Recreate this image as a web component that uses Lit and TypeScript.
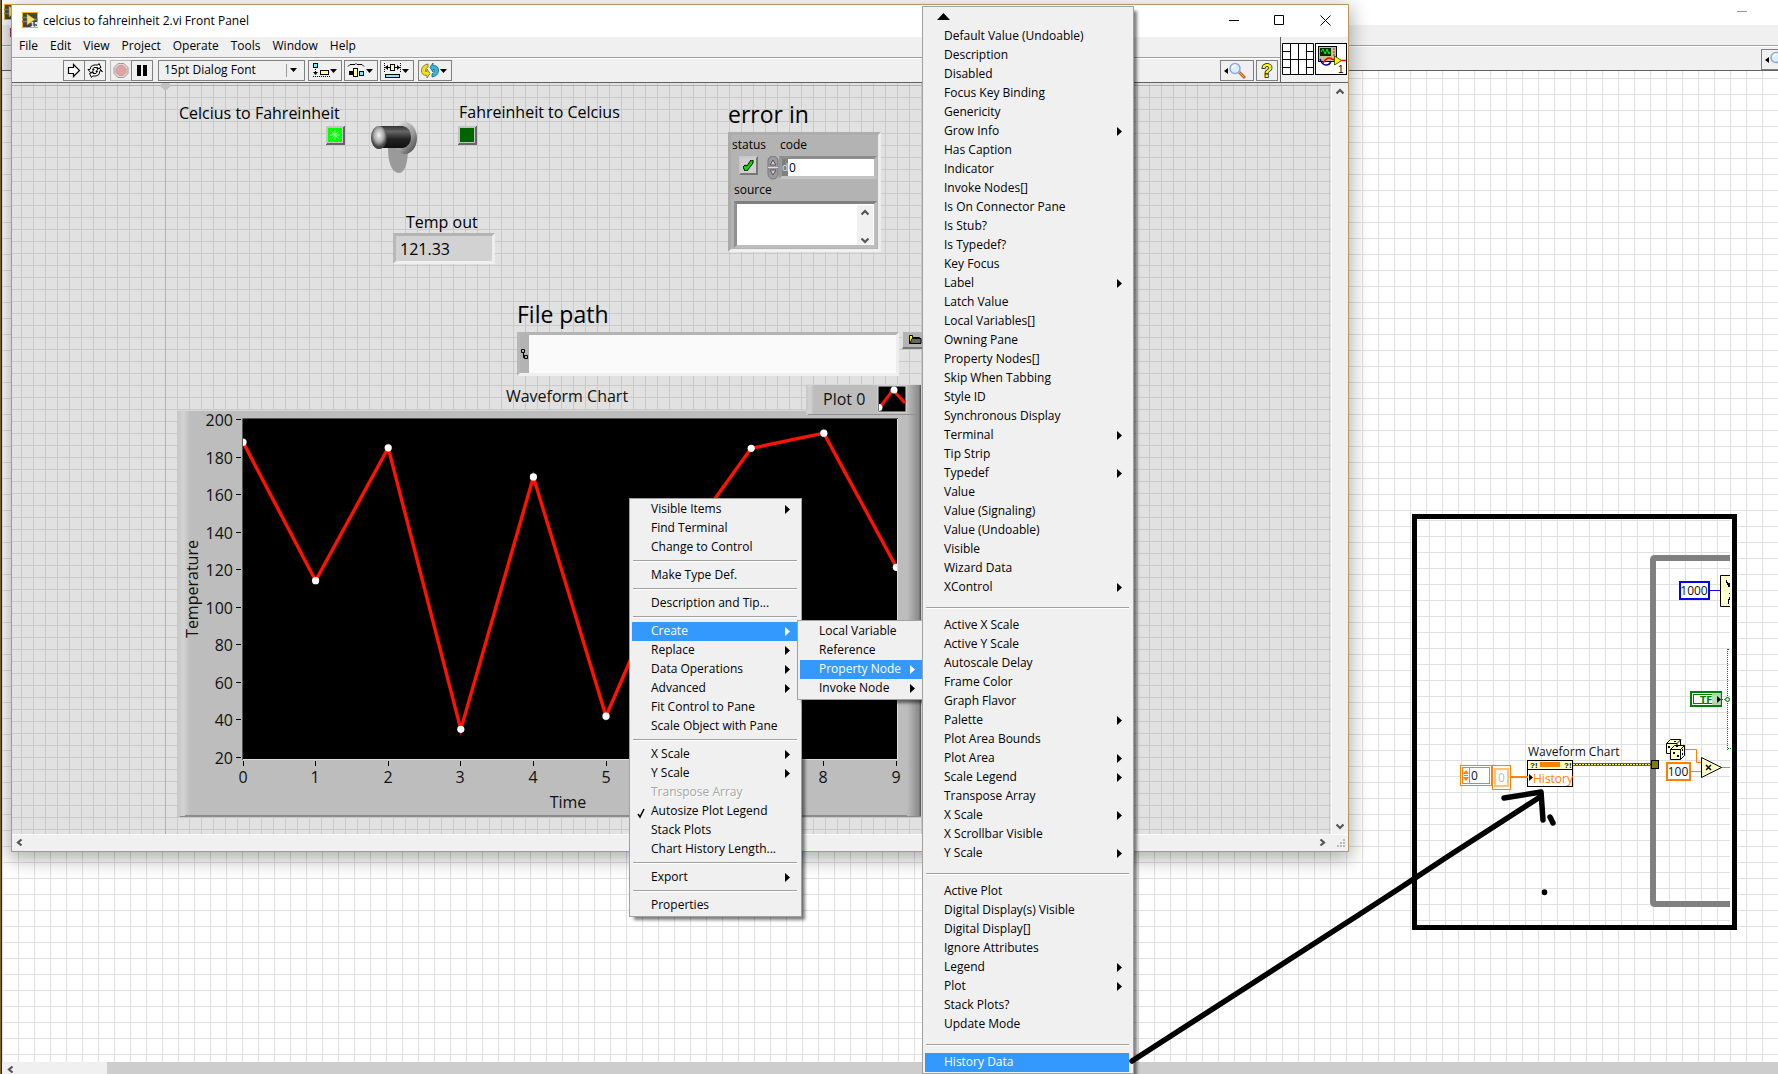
import { LitElement, html, svg, css, nothing } from "lit";
import { customElement, property } from "lit/decorators.js";
import { classMap } from "lit/directives/class-map.js";

type Item = {
  text?: string;
  sub?: boolean;
  active?: boolean;
  disabled?: boolean;
  checked?: boolean;
};

const SEP: Item = {};
const t = (text: string, extra: Partial<Item> = {}): Item => ({ text, ...extra });
const s = (text: string, extra: Partial<Item> = {}): Item => ({ text, sub: true, ...extra });

const CHART_MENU: Item[] = [
  s("Visible Items"), t("Find Terminal"), t("Change to Control"), SEP,
  t("Make Type Def."), SEP,
  t("Description and Tip..."), SEP,
  s("Create", { active: true }), s("Replace"), s("Data Operations"), s("Advanced"),
  t("Fit Control to Pane"), t("Scale Object with Pane"), SEP,
  s("X Scale"), s("Y Scale"), t("Transpose Array", { disabled: true }),
  t("Autosize Plot Legend", { checked: true }), t("Stack Plots"), t("Chart History Length..."), SEP,
  s("Export"), SEP,
  t("Properties"),
];

const CREATE_MENU: Item[] = [
  t("Local Variable"), t("Reference"), s("Property Node", { active: true }), s("Invoke Node"),
];

const PROPERTY_MENU: Item[] = [
  t("Default Value (Undoable)"), t("Description"), t("Disabled"), t("Focus Key Binding"),
  t("Genericity"), s("Grow Info"), t("Has Caption"), t("Indicator"), t("Invoke Nodes[]"),
  t("Is On Connector Pane"), t("Is Stub?"), t("Is Typedef?"), t("Key Focus"), s("Label"),
  t("Latch Value"), t("Local Variables[]"), t("Owning Pane"), t("Property Nodes[]"),
  t("Skip When Tabbing"), t("Style ID"), t("Synchronous Display"), s("Terminal"),
  t("Tip Strip"), s("Typedef"), t("Value"), t("Value (Signaling)"), t("Value (Undoable)"),
  t("Visible"), t("Wizard Data"), s("XControl"), SEP,
  t("Active X Scale"), t("Active Y Scale"), t("Autoscale Delay"), t("Frame Color"),
  t("Graph Flavor"), s("Palette"), t("Plot Area Bounds"), s("Plot Area"), s("Scale Legend"),
  t("Transpose Array"), s("X Scale"), t("X Scrollbar Visible"), s("Y Scale"), SEP,
  t("Active Plot"), t("Digital Display(s) Visible"), t("Digital Display[]"),
  t("Ignore Attributes"), s("Legend"), s("Plot"), t("Stack Plots?"), t("Update Mode"), SEP,
  t("History Data", { active: true }),
];

const FONT = css`"Open Sans", "Noto Sans", sans-serif`;

@customElement("popup-menu")
export class PopupMenu extends LitElement {
  @property({ attribute: false }) items: Item[] = [];
  @property({ type: Boolean }) tall = false;

  static styles = css`
    :host {
      display: block;
      box-sizing: border-box;
      background: #f0f0f0;
      border: 1px solid #a0a0a0;
      padding: 1px 4px 1px 2px;
      box-shadow: 4px 4px 3px -1px rgba(0, 0, 0, 0.5);
      font: 12px/16px ${FONT};
      color: #000;
    }
    .item {
      display: grid;
      grid-template-columns: 19px 1fr 5px;
      align-items: center;
      width: 100%;
      height: 19px;
      margin: 0;
      border: 0;
      padding: 0 7px 0 0;
      background: none;
      font: inherit;
      color: inherit;
      text-align: left;
      white-space: nowrap;
    }
    .label { grid-column: 2; padding-bottom: 2px; }
    .tick { grid-column: 1; grid-row: 1; }
    .active { background: #3399ff; color: #fff; }
    .disabled { color: #a6a6a6; text-shadow: 1px 1px #fff; }
    .arrow { display: block; fill: currentColor; grid-column: 3; }
    .sep {
      height: 1px;
      margin: 3px 0 4px 1px;
      border: 0;
      background: #a0a0a0;
      border-bottom: 1px solid #fff;
    }
    .tall { margin: 10px 0 7px 1px; }
    .up { display: flex; height: 19px; padding: 0 12px 2px; align-items: center; border: 0; background: none; }
  `;

  render() {
    return html`
      ${this.tall
        ? html`<button class="up" aria-label="Scroll up">
            <svg width="13" height="7"><path d="M6.500 0L13 7H0z" /></svg>
          </button>`
        : nothing}
      ${this.items.map((i) =>
        i.text
          ? html`<button
              role="menuitem"
              class=${classMap({ item: true, active: !!i.active, disabled: !!i.disabled })}
            >
              ${i.checked
                ? html`<svg class="tick" width="14" height="14">
                    <path d="M6 9l2 3 4-8" fill="none" stroke="#000" stroke-width="1.500" />
                  </svg>`
                : nothing}
              <span class="label">${i.text}</span>
              ${i.sub
                ? html`<svg class="arrow" width="5" height="9"><path d="M0 0l5 4.500-5 4.500z" /></svg>`
                : nothing}
            </button>`
          : html`<hr class=${classMap({ sep: true, tall: this.tall })} />`
      )}
    `;
  }
}

const X0 = 66;
const STEP = 72.6;
const READINGS: Array<[number, number]> = [
  [0, 188], [1, 114.200], [2, 185], [3, 35], [4, 169.500], [5, 42], [6, 131], [7, 184.700], [8, 192.800], [9, 121.330],
];
const yPos = (v: number) => 347.5 - (v - 20) * 1.877;
const xPos = (v: number) => X0 + v * STEP;

@customElement("waveform-chart")
export class WaveformChart extends LitElement {
  static styles = css`
    :host { display: block; }
    svg { display: block; overflow: visible; }
    text { font: 16px ${FONT}; fill: #111; }
  `;

  render() {
    const line = READINGS.map(([x, v]) => `${xPos(x)},${yPos(v)}`).join(" ");
    return html`<svg width="744" height="433" role="img" aria-label="Waveform Chart">
      <defs>
        <linearGradient id="left"><stop offset="0" stop-color="#c6c6c6" /><stop offset=".5" stop-color="#d3d3d3" /><stop offset="1" stop-color="#bdbdbd" /></linearGradient>
        <linearGradient id="right"><stop offset="0" stop-color="#bdbdbd" /><stop offset=".85" stop-color="#8a8a8a" /><stop offset="1" stop-color="#505050" /></linearGradient>
        <clipPath id="plot"><rect x="66" y="10" width="654" height="339" /></clipPath>
      </defs>
      <rect x="0" y="0" width="744" height="407" fill="#bdbdbd" />
      <rect x="0" y="0" width="13" height="406" fill="url(#left)" />
      <path d="M0 .5H744" stroke="#d8d8d8" />
      <path d="M3 406.500H744M8 405.500H744" stroke="#8c8c8c" />
      <rect x="629" y="-26" width="115" height="31" fill="#bdbdbd" />
      <rect x="629" y="-26" width="8" height="31" fill="url(#left)" />
      <path d="M629 -25.500H744" stroke="#d8d8d8" />
      <rect x="730" y="-25" width="14" height="431" fill="url(#right)" />
      <path d="M631 4.500H742" stroke="#929292" />
      <rect x="65" y="8" width="656" height="342" fill="#ddd" />
      <path d="M65.500 350V8.500H721" stroke="#555" fill="none" />
      <rect x="66" y="9" width="654" height="340" fill="#000" />
      <g clip-path="url(#plot)">
        <polyline points=${line} fill="none" stroke="#ff1200" stroke-width="3.400" />
        ${READINGS.map(([x, v]) => svg`<circle cx=${xPos(x)} cy=${yPos(v)} r="3.600" fill="#fff" />`)}
      </g>
      ${[20, 40, 60, 80, 100, 120, 140, 160, 180, 200].map(
        (v) => svg`
          <path d="M59 ${Math.floor(yPos(v))}.5h5" stroke="#000" />
          <text x="56" y=${Math.floor(yPos(v)) + 7} text-anchor="end">${v}</text>`
      )}
      ${[0, 1, 2, 3, 4, 5, 8, 9].map(
        (v) => svg`
          <path d="M${Math.floor(xPos(v))}.5 351v5" stroke="#000" />
          <text x=${Math.floor(xPos(v))} y="373" text-anchor="middle">${v}</text>`
      )}
      <text x="391" y="398" text-anchor="middle">Time</text>
      <text x="390" y="-8" text-anchor="middle">Waveform Chart</text>
      <text transform="translate(21 179) rotate(-90)" text-anchor="middle">Temperature</text>
      <text x="646" y="-5">Plot 0</text>
      <rect x="701" y="-24" width="28" height="26" fill="#000" stroke="#ddd" />
      <path d="M703 -3L716 -20L728 -7" fill="none" stroke="#ff1200" stroke-width="3" />
      <circle cx="717" cy="-20" r="3.500" fill="#fff" />
      <path d="M702 -6a3.500 3.500 0 0 1 0 7z" fill="#fff" />
    </svg>`;
  }
}

@customElement("diagram-view")
export class DiagramView extends LitElement {
  static styles = css`
    :host { display: block; }
    svg { display: block; }
    text { font: 12px ${FONT}; fill: #111; }
    .orange { fill: #ff8000; }
    .pale { fill: #bbb; }
    .tf { font: bold 9px "DejaVu Sans", sans-serif; fill: #008000; }
    .mark { font: bold 8px "Liberation Sans", sans-serif; }
  `;

  render() {
    return html`<svg width="325" height="416" role="img" aria-label="Block diagram">
      <defs>
        <pattern id="grid" x="17" y="6" width="16" height="16" patternUnits="userSpaceOnUse">
          <path d="M.5 0V16M0 .5H16" stroke="#e0e0e0" />
        </pattern>
      </defs>
      <rect x="2.500" y="2.500" width="320" height="411" fill="#fff" stroke="#000" stroke-width="5" />
      <rect x="5" y="5" width="313" height="406" fill="url(#grid)" />
      <path d="M318 44H243q-2 0-2 2V388q0 2 2 2H318" fill="none" stroke="#808080" stroke-width="6" />

      <rect x="268" y="68" width="29" height="17" fill="#fff" stroke="#00f" stroke-width="2" />
      <text x="282" y="81" text-anchor="middle">1000</text>
      <path d="M298 76.500h11" stroke="#00f" />
      <path d="M318 61.500H308.500v31H318z" fill="#ffffcc" />
      <path d="M318 61.500H308.500v31H318" fill="none" stroke="#000" />
      <path d="M314 66h1v2h1v1h2v4h-2v-2h-1v-2h-1zM317 80h1v3h-1v2h-1v5h1v-4h1v-7h-1z" />

      <rect x="279" y="178" width="30" height="14" fill="#fff" stroke="#008000" stroke-width="2" />
      <rect x="281.500" y="180.500" width="25" height="9" fill="none" stroke="#008000" />
      <rect x="300" y="179" width="9" height="12" fill="#b0d8b0" opacity=".9" />
      <text x="288" y="189" class="tf">TF</text>
      <path d="M305 182l4 3.500-4 3.500z" />
      <path d="M310 185.500h5M315.500 135V236M316 234.500h3M316 135.500h2" stroke="#008000" stroke-dasharray="1 1" />
      <circle cx="315.500" cy="185.500" r="2" fill="#cfe8cf" stroke="#008000" />

      <path d="M273 235.500h11.500v13H290M279 257.500h12M309 253.500h9" fill="none" stroke="#ff8000" />
      <g fill="#ffffcc" stroke="#000">
        <path d="M254.500 229.500l4-4h10v11l-3 3h-11z" />
        <path d="M254.500 229.500h10.500l4-4M265 229.500v8" fill="none" />
        <path d="M258.500 235.500l4-4h10v10l-4 4h-10z" />
        <path d="M258.500 235.500h10l4-4M268.500 235.500v10" fill="none" />
      </g>
      <path d="M256 232h2v2h-2zM261 238h2v2h-2zM265 241h2v2h-2zM270 235h1v2h-1zM270 239h1v2h-1zM264 232h2v1h-2zM262 227h2v1h-2z" />
      <rect x="255" y="249" width="23" height="17" fill="#fff" stroke="#ff8000" stroke-width="2" />
      <text x="266" y="262" text-anchor="middle">100</text>
      <path d="M289.500 243.500v20l20-10z" fill="#ffffcc" stroke="#000" />
      <path d="M294 251l5 5M299 251l-5 5" stroke="#000" stroke-width="1.500" />

      <path d="M161 250.500h78" stroke="#111" stroke-width="3" />
      <path d="M161 250.500h78" stroke="#ffff40" stroke-dasharray="2 1" />
      <path d="M161 249.500h78M161 251.500h78" stroke="#a8a800" stroke-width=".6" />
      <rect x="239.500" y="246.500" width="7" height="8" fill="#808000" stroke="#000" />

      <text x="116" y="242">Waveform Chart</text>
      <rect x="115.500" y="246.500" width="45" height="26" fill="#fff" stroke="#000" />
      <rect x="116" y="247" width="44" height="8" fill="#ffffcc" />
      <path d="M116 255.500h44" stroke="#000" />
      <rect x="128" y="248" width="20" height="5" fill="#ff8000" />
      <text class="mark" x="118" y="254">?!</text>
      <text class="mark" x="152" y="254">?!</text>
      <path d="M117 260l4 3.500-4 3.500z" />
      <text class="orange" x="121" y="269">History</text>

      <path d="M99 263h17" stroke="#ff8000" stroke-width="2" />
      <g fill="#fff" stroke="#ff8000">
        <rect x="48.500" y="251.500" width="31" height="20" />
        <rect x="50.500" y="253.500" width="7" height="16" />
        <rect x="57.500" y="253.500" width="20" height="16" />
        <rect x="80.500" y="251.500" width="18" height="24" />
        <rect x="83" y="255" width="13" height="17" stroke="#ffc080" stroke-width="2" />
      </g>
      <path class="orange" d="M51 260l3-4 3 4zM51 263l3 4 3-4zM52 261h4v1h-4z" />
      <text x="59" y="266">0</text>
      <text class="pale" x="86" y="268">0</text>
    </svg>`;
  }
}

const magnifier = html`<svg width="32" height="19">
  <path d="M3 10l4-3v6z" />
  <path d="M18 11l6 6" stroke="#c66a1c" stroke-width="3" />
  <path d="M18 11l5 5" stroke="#f4a850" stroke-width="1" />
  <circle cx="14" cy="7.500" r="5" fill="#d8f0ff" stroke="#8fa8d8" stroke-width="1.500" />
  <path d="M11 7q1-3 4-3" stroke="#fff" fill="none" stroke-width="1.500" />
</svg>`;

const viIcon = html`<svg width="16" height="16">
  <rect x=".5" y=".5" width="15" height="15" fill="#444" stroke="#f0b000" />
  <path d="M0 5.500h6M0 9.500h6M11 7.500h5" stroke="#2f8fd0" stroke-width="1.500" />
  <path d="M5 2v11l8-5.500z" fill="#ffe060" stroke="#b88a00" stroke-width=".5" />
  <text x="8.500" y="14.500" font-family="Liberation Sans, sans-serif" font-size="7" font-weight="bold" fill="#fff">15</text>
</svg>`;

const drop = svg`<path d="M21 8h7l-3.500 4z" />`;

@customElement("app-root")
export class AppRoot extends LitElement {
  static styles = css`
    :host {
      display: block;
      position: relative;
      height: 100vh;
      overflow: hidden;
      background: linear-gradient(90deg, #7d6434 0 1px, #26282c 1px 2px, #f0f0f0 2px);
      font: 12px/16px ${FONT};
      color: #000;
    }
    * { box-sizing: border-box; }
    svg { display: block; flex: none; }
    button, input, select, textarea { font: inherit; color: inherit; margin: 0; }

    /* block diagram window behind */
    .back {
      display: flex;
      flex-direction: column;
      height: 100%;
      margin-left: 2px;
    }
    .back-title {
      display: flex;
      justify-content: space-between;
      height: 25px;
      padding: 4px 31px 0 2px;
      background: #fff;
    }
    .back-title .min { width: 10px; height: 1px; margin-top: 7px; background: #999; }
    .back-menu { height: 21px; border-bottom: 1px solid #a0a0a0; background: #f0f0f0; padding-left: 7px; color: #602; }
    .back-tools {
      display: flex;
      justify-content: flex-end;
      height: 25px;
      padding-top: 2px;
      border-top: 1px solid #fff;
      border-bottom: 1px solid #606060;
    }
    .back-tools .tool { margin-right: -17px; }
    .back-canvas {
      flex: 1;
      background:
        linear-gradient(#e0e0e0 0 1px, transparent 1px) 0 7px / 16px 16px,
        linear-gradient(90deg, #e0e0e0 0 1px, transparent 1px) 0 0 / 16px 16px,
        #fff;
    }
    .back-scroll { display: flex; height: 12px; background: #f0f0f0; overflow: hidden; }
    .back-scroll .arrow { width: 105px; height: 12px; padding: 4px 0 0 5px; }
    .back-scroll .thumb { flex: 1; background: #cdcdcd; }

    /* front panel window */
    .front {
      position: absolute;
      left: 11px;
      top: 4px;
      width: 1338px;
      height: 848px;
      display: flex;
      flex-direction: column;
      border: 1px solid #b5995a;
      background: #f0f0f0;
      box-shadow: 0 5px 18px 2px rgba(0, 0, 0, 0.32);
    }
    .title { display: flex; align-items: center; height: 32px; padding: 0 17px 2px 10px; background: #fff; }
    .title h1 { flex: 1; margin: 0 0 0 5px; padding-top: 2px; font: inherit; }
    .title .controls { display: flex; gap: 35px; }
    .icon-btn { border: 0; padding: 0; background: none; display: block; }
    .bars { display: flex; height: 46px; border-bottom: 1px solid #606060; }
    .stack { flex: 1; display: flex; flex-direction: column; }
    .menubar { display: flex; gap: 12px; height: 21px; padding-left: 7px; border-bottom: 1px solid #a0a0a0; }
    .menubar button { border: 0; padding: 0 0 2px; background: none; }
    .toolbar { display: flex; height: 24px; padding: 1px 2px 0 51px; border-top: 1px solid #fff; }
    .tool {
      display: block;
      height: 21px;
      border: 1px solid #808080;
      padding: 0;
      background: #f0f0f0;
      flex: none;
    }
    .run { width: 22px; }
    .joined { margin-left: -1px; }
    .dim { border-color: #b8b8b8; margin-left: 4px; }
    .drop { width: 34px; margin-left: 2px; }
    .first { margin-left: 3px; }
    .last { margin-left: 4px; }
    .font { position: relative; width: 147px; height: 21px; margin-left: 5px; }
    .font select {
      width: 100%;
      height: 21px;
      appearance: none;
      border: 1px solid #808080;
      border-radius: 0;
      background: #f0f0f0;
      padding: 0 5px 2px;
    }
    .font svg { position: absolute; right: 0; top: 0; pointer-events: none; }
    .find { width: 34px; margin-left: auto; }
    .help { width: 22px; margin-left: 2px; }
    .panes { display: flex; gap: 1px; width: 68px; padding: 6px 0 0 1px; border-left: 1px solid #606060; }
    .body { flex: 1; display: flex; min-height: 0; }
    .canvas {
      position: relative;
      flex: 1;
      overflow: hidden;
      background:
        linear-gradient(#b0b0b0, #b0b0b0) 0 2px / 100% 1px no-repeat,
        linear-gradient(#b0b0b0, #b0b0b0) 153px 0 / 1px 100% no-repeat,
        linear-gradient(#c9c9c9 0 1px, transparent 1px) 0 2px / 12px 12px,
        linear-gradient(90deg, #c9c9c9 0 1px, transparent 1px) 9px 0 / 12px 12px,
        #e1e1e1;
    }
    .vscroll {
      display: flex;
      flex-direction: column;
      justify-content: space-between;
      width: 17px;
      padding: 5px 0 4px 4px;
      border-left: 1px solid #fff;
    }
    .hscroll {
      display: flex;
      justify-content: space-between;
      height: 17px;
      padding: 4px 2px 0 4px;
      border-top: 1px solid #fff;
    }
    .hscroll .end { display: flex; gap: 10px; }

    /* objects placed freely on the panel */
    .obj { position: absolute; }
    .cap { font-size: 16px; line-height: 22px; white-space: nowrap; }
    .big { font-size: 23px; line-height: 30px; white-space: nowrap; }
    .origin { left: 148px; top: 0; }
    .c2f { left: 167px; top: 19px; }
    .f2c { left: 447px; top: 18px; }
    .led-on { left: 314px; top: 43px; }
    .led-off { left: 446px; top: 43px; }
    .switch { left: 358px; top: 38px; }
    .temp-label { left: 394px; top: 128px; }
    .temp {
      left: 381px;
      top: 150px;
      width: 102px;
      height: 31px;
      border: 3px solid;
      border-color: #b4b4b4 #eee #f0f0f0 #b8b8b8;
      background: #d2d2d2;
      padding: 0 4px;
      font-size: 16px;
      border-radius: 0;
    }
    .err-label { left: 716px; top: 16px; }
    .cluster {
      left: 716px;
      top: 49px;
      width: 153px;
      height: 120px;
      display: grid;
      grid-template-columns: 36px 12px minmax(0, 1fr);
      grid-template-rows: 21px 24px 21px minmax(0, 1fr);
      border: 3px solid;
      border-color: #adadad #ededed #f0f0f0 #aaa;
      background: #b3b3b3;
    }
    .cluster label { line-height: 20px; padding-left: 1px; }
    .cluster .code-label { grid-column: 2 / 4; padding-left: 13px; }
    .check { display: grid; justify-content: start; align-content: start; padding-left: 8px; }
    .check input, .check svg { grid-area: 1 / 1; }
    .check svg { margin: 4px; pointer-events: none; z-index: 1; }
    .check input {
      appearance: none;
      width: 19px;
      height: 19px;
      border: 2px solid;
      border-color: #c8c8c8 #777 #777 #c8c8c8;
      background: #cfcfcf;
    }
    .code { display: flex; height: 23px; margin-right: 1px; border: 3px solid; border-color: #8c8c8c #bcbcbc #c4c4c4 #999; }
    .radix { width: 6px; color: #ddd; background: #808080; font-size: 10px; line-height: 17px; }
    .code input { flex: 1; min-width: 0; border: 0; padding: 0 1px; background: #fff; border-radius: 0; }
    .cluster .source-label { grid-column: 1 / 4; padding-left: 3px; }
    .source {
      grid-column: 1 / 4;
      display: flex;
      margin: 0 1px 1px 3px;
      border: 3px solid;
      border-color: #808080 #bdbdbd #bdbdbd #909090;
      background: #fff;
    }
    .source textarea { flex: 1; min-width: 0; border: 0; padding: 0; resize: none; background: #fff; overflow: hidden; }
    .source .side {
      display: flex;
      flex-direction: column;
      justify-content: space-between;
      width: 16px;
      margin: 1px;
      padding: 4px 4px 0;
      background: #f0f0f0;
    }
    .path-label { left: 505px; top: 216px; }
    .path {
      left: 505px;
      top: 249px;
      width: 382px;
      height: 44px;
      display: flex;
      border: 3px solid;
      border-color: #b4b4b4 #eee #f0f0f0 #b8b8b8;
    }
    .path .handle { width: 9px; background: #b3b3b3; padding: 14px 1px; }
    .path input { flex: 1; min-width: 0; border: 0; background: #fafafa; border-radius: 0; }
    .browse {
      left: 890px;
      top: 248px;
      border: 1px solid;
      border-color: #ddd #777 #777 #ddd;
      border-bottom-width: 2px;
      padding: 2px 5px;
      background: #b3b3b3;
    }
    .chart { left: 165px; top: 327px; }

    .diagram { position: absolute; left: 1412px; top: 514px; }
    .chart-menu { position: absolute; left: 629px; top: 498px; width: 173px; }
    .create-menu { position: absolute; left: 797px; top: 620px; width: 130px; }
    .property-menu { position: absolute; left: 922px; top: 6px; width: 212px; }
    .pen { position: absolute; left: 1120px; top: 780px; pointer-events: none; }
  `;

  private led(cls: string, on: boolean) {
    return html`<svg class="obj ${cls}" width="19" height="19">
      <rect width="19" height="19" fill="#c4c4c4" />
      <path d="M18 0v18H0v1h19V0zM17 1v16H1v1h17V1z" fill="#666" />
      <rect x="2" y="2" width="14" height="14" fill=${on ? "#00ff00" : "#006400"} />
      ${on
        ? svg`<path d="M9 4v10M4 9h10M5.500 5.500l7 7M12.500 5.500l-7 7" stroke="#9cff9c" stroke-width="1" />`
        : nothing}
    </svg>`;
  }

  private chevron(dir: string) {
    const d: Record<string, string> = {
      left: "M5.500 0.500L2 3.500L5.500 6.500",
      right: "M1.500 0.500L5 3.500L1.500 6.500",
      up: "M0.500 5.500L4 2L7.500 5.500",
      down: "M0.500 1.500L4 5L7.500 1.500",
    };
    return html`<svg width="8" height="7"><path d=${d[dir]} fill="none" stroke="#555" stroke-width="2.200" /></svg>`;
  }

  private toolbar() {
    return html`<div class="toolbar">
      <button class="tool run" aria-label="Run">
        <svg width="20" height="19"><path d="M4.500 6.500h5V3.500l6 6-6 6v-3h-5z" fill="#fff" stroke="#000" stroke-width="1.200" /></svg>
      </button>
      <button class="tool run joined" aria-label="Run continuously">
        <svg width="20" height="19" fill="none" stroke="#000">
          <path d="M5 8.500l1-3 3-1.500h4l1-1.500 2 4-4 1.500.5-1.500H9L7.500 8.500h1.500l-3 3.500-3-3.500z" fill="#fff" />
          <path d="M15 9.500l-1 4-3 1.500H7.500l-1 1.500-2-4 4-1.500-.5 1.500H11l1.500-2H11l3-3.500 3.500 3.500z" fill="#fff" />
        </svg>
      </button>
      <button class="tool run dim" aria-label="Abort">
        <svg width="20" height="19">
          <path d="M7 2.500h6l4 4v6l-4 4H7l-4-4v-6z" fill="#e8d4d4" stroke="#9c9c9c" />
          <path d="M8 4.500h4l3 3v4l-3 3H8l-3-3v-4z" fill="#dda4a4" stroke="#d09c9c" />
        </svg>
      </button>
      <button class="tool run joined" aria-label="Pause">
        <svg width="20" height="19"><path d="M5 4h4v11H5zM11 4h4v11h-4z" /></svg>
      </button>
      <div class="font">
        <select aria-label="Text settings"><option>15pt Dialog Font</option></select>
        <svg width="20" height="21"><path d="M1.500 4v13" stroke="#999" /><path d="M5 8h7l-3.500 4z" /></svg>
      </div>
      <button class="tool drop first" aria-label="Align objects">
        <svg width="32" height="19">
          <rect x="4.500" y="2.500" width="4" height="4" fill="#7de8f8" stroke="#000" />
          <rect x="11.500" y="9.500" width="8" height="4" fill="#ffffa0" stroke="#000" />
          <path d="M6.500 8v4M4 15.500h17" stroke="#000" stroke-dasharray="1 1" /><path d="M4 11h5l-2.500 3z" />${drop}
        </svg>
      </button>
      <button class="tool drop" aria-label="Distribute objects">
        <svg width="32" height="19">
          <path d="M3 5.500l2-2h5l1-1 1 1h5l2 2" stroke="#000" fill="none" />
          <path d="M4 10h4v4H4z" />
          <rect x="8.500" y="7.500" width="4" height="8" fill="#ffffa0" stroke="#000" />
          <rect x="14.500" y="10.500" width="4" height="4" fill="#7de8f8" stroke="#000" />${drop}
        </svg>
      </button>
      <button class="tool drop" aria-label="Resize objects">
        <svg width="32" height="19">
          <path d="M3.500 2v9M19.500 2v9" stroke="#000" stroke-dasharray="1 1" />
          <path d="M4 6.500h5M14 6.500h5" stroke="#000" /><path d="M4 6.500l3-2.500v5zM19 6.500l-3-2.500v5z" />
          <rect x="9.500" y="3.500" width="4" height="6" fill="#ffffa0" stroke="#000" />
          <rect x="4.500" y="13.500" width="14" height="3" fill="#7de8f8" stroke="#000" />${drop}
        </svg>
      </button>
      <button class="tool drop last" aria-label="Reorder">
        <svg width="32" height="19">
          <path d="M9 3v3q-3 1-2.500 4.500H8V8l3 4.500L8 17v-2.500Q2 14.500 2.500 9 3 4 9 3z" fill="#f0e020" stroke="#7a7010" stroke-width=".8" />
          <path d="M13 16v-3q3-1 2.500-4.500H14V11L11 6.500 14 2v2.500q6 0 5.500 5.500-.5 5-6.500 6z" fill="#38b8d8" stroke="#106080" stroke-width=".8" />${drop}
        </svg>
      </button>
      <button class="tool find" aria-label="Search">${magnifier}</button>
      <button class="tool help" aria-label="Context help">
        <svg width="20" height="19">
          <text x="10" y="16" text-anchor="middle" font-family="Liberation Sans, sans-serif" font-size="18" font-weight="bold" fill="#ff0" stroke="#000" stroke-width="1.500" paint-order="stroke">?</text>
        </svg>
      </button>
    </div>`;
  }

  private panel() {
    return html`<main class="canvas">
      <svg class="obj origin" width="11" height="8"><path d="M2 0h7l2 3-5.500 5L0 3z" fill="#c0c0c0" /></svg>
      <span class="obj cap c2f">Celcius to Fahreinheit</span>
      <span class="obj cap f2c">Fahreinheit to Celcius</span>
      ${this.led("led-on", true)} ${this.led("led-off", false)}
      <button class="obj icon-btn switch" aria-label="Toggle conversion">
        <svg width="48" height="54">
          <defs>
            <linearGradient id="bar" x2="0" y2="1"><stop offset="0" stop-color="#333" /><stop offset=".25" stop-color="#666" /><stop offset=".6" stop-color="#222" /><stop offset="1" stop-color="#111" /></linearGradient>
            <radialGradient id="ball" cx=".5" cy=".4"><stop offset="0" stop-color="#f4f4f4" /><stop offset=".6" stop-color="#aaa" /><stop offset="1" stop-color="#444" /></radialGradient>
            <linearGradient id="base" x2="1" y2="1"><stop offset="0" stop-color="#eee" /><stop offset=".6" stop-color="#999" /><stop offset="1" stop-color="#333" /></linearGradient>
          </defs>
          <path d="M18 26q0 25 11 26 9-1 9-26z" fill="#9a9a9a" />
          <ellipse cx="35" cy="17" rx="12" ry="16" fill="url(#base)" />
          <path d="M9 5h24q8 2 8 11t-8 11H9z" fill="url(#bar)" />
          <ellipse cx="9" cy="16.500" rx="8" ry="11.500" fill="url(#ball)" />
        </svg>
      </button>
      <label class="obj cap temp-label" for="temp">Temp out</label>
      <input class="obj temp" id="temp" readonly .value=${"121.33"} />
      <span class="obj big err-label">error in</span>
      <div class="obj cluster">
        <label for="status">status</label>
        <label class="code-label" for="code">code</label>
        <div class="check">
          <input id="status" type="checkbox" checked />
          <svg width="11" height="11"><path d="M0 7l2-2 2 1 4-6h2v3L4 11H2z" fill="#00e000" stroke="#000" /></svg>
        </div>
        <svg width="12" height="24">
          <rect x="1" y="0" width="10" height="23" rx="5" fill="#9a9aa0" stroke="#777" />
          <path d="M3 9l3-5 3 5zM3 14l3 5 3-5z" fill="#ccc" stroke="#555" />
          <path d="M1 11.500h10" stroke="#ddd" />
        </svg>
        <div class="code"><span class="radix">d</span><input id="code" .value=${"0"} /></div>
        <label class="source-label" for="source">source</label>
        <div class="source">
          <textarea id="source"></textarea>
          <div class="side">${this.chevron("up")}${this.chevron("down")}</div>
        </div>
      </div>
      <label class="obj big path-label" for="path">File path</label>
      <div class="obj path">
        <div class="handle">
          <svg width="7" height="11" fill="none" stroke="#000"><path d="M.5.5h3v3h-3zM2.500 4v4.500h1M3.500 6.500h3v3h-3z" /></svg>
        </div>
        <input id="path" />
      </div>
      <button class="obj browse" aria-label="Browse">
        <svg width="14" height="11"><path d="M1.500 9.500v-8h3v2h7v6z" fill="#ff0" stroke="#000" /><path d="M2 9.500l2-5h9v5z" fill="#666" stroke="#000" /></svg>
      </button>
      <waveform-chart class="obj chart"></waveform-chart>
    </main>`;
  }

  render() {
    return html`
      <section class="back">
        <div class="back-title">${viIcon}<span class="min"></span></div>
        <div class="back-menu">F</div>
        <div class="back-tools"><button class="tool find-back" aria-label="Search diagram">${magnifier}</button></div>
        <div class="back-canvas"></div>
        <div class="back-scroll"><div class="arrow">${this.chevron("left")}</div><div class="thumb"></div></div>
      </section>

      <diagram-view class="diagram"></diagram-view>

      <section class="front">
        <header class="title">
          ${viIcon}
          <h1>celcius to fahreinheit 2.vi Front Panel</h1>
          <div class="controls">
            <button class="icon-btn" aria-label="Minimize"><svg width="10" height="11"><path d="M0 5.500h10" stroke="#000" /></svg></button>
            <button class="icon-btn" aria-label="Maximize"><svg width="11" height="11"><path d="M.5.500h9v9h-9z" fill="none" stroke="#000" /></svg></button>
            <button class="icon-btn" aria-label="Close"><svg width="11" height="11"><path d="M.5.5l10 10M10.500.5l-10 10" stroke="#000" /></svg></button>
          </div>
        </header>
        <div class="bars">
          <div class="stack">
            <nav class="menubar">
              ${["File", "Edit", "View", "Project", "Operate", "Tools", "Window", "Help"].map((m) => html`<button>${m}</button>`)}
            </nav>
            ${this.toolbar()}
          </div>
          <div class="panes">
            <svg width="32" height="32" fill="#fff" stroke="#000">
              <path d="M.5.5h31v31H.5z" /><path d="M8.500 0v32M16.500 0v32M24.500 0v32M0 16.500h32M0 8.500h8M0 24.500h8M24 8.500h8M24 24.500h8" />
            </svg>
            <svg width="32" height="32">
              <rect x=".5" y=".5" width="31" height="31" fill="#fff" stroke="#000" />
              <rect x="3.500" y="3.500" width="18" height="15" fill="#c8c090" stroke="#000" />
              <rect x="5" y="5" width="11" height="8" fill="#003000" />
              <path d="M6 9l2-3 2 5 2-5 2 5 1-2" fill="none" stroke="#0f0" />
              <path d="M18 6h2M18 9h2M18 12h2" stroke="#a03020" />
              <path d="M5 16q2 6 6 6t5-4" fill="none" stroke="#00a" stroke-width="1.500" />
              <path d="M8 20q4-7 9-4l3 1M26 17.500h5" fill="none" stroke="#f00" stroke-width="1.500" />
              <path d="M19.500 13v9l7-4.500z" fill="#ff0" stroke="#550" />
              <text x="23" y="30" font-size="10" font-family="Liberation Sans, sans-serif">1</text>
            </svg>
          </div>
        </div>
        <div class="body">
          ${this.panel()}
          <div class="vscroll">${this.chevron("up")}${this.chevron("down")}</div>
        </div>
        <div class="hscroll">
          ${this.chevron("left")}
          <div class="end">
            ${this.chevron("right")}
            <svg width="9" height="9"><path d="M0 6h2v2H0zM3 6h2v2H3zM6 6h2v2H6zM3 3h2v2H3zM6 3h2v2H6zM6 0h2v2H6z" fill="#bbb" /></svg>
          </div>
        </div>
      </section>

      <popup-menu class="chart-menu" role="menu" .items=${CHART_MENU}></popup-menu>
      <popup-menu class="create-menu" role="menu" .items=${CREATE_MENU}></popup-menu>
      <popup-menu class="property-menu" role="menu" tall .items=${PROPERTY_MENU}></popup-menu>

      <svg class="pen" width="440" height="290" fill="none" stroke="#000" stroke-width="5.500" stroke-linecap="round" stroke-linejoin="round">
        <path d="M12 281L240 134L280 108L330 75L420 17M384 18L421 12L423 40M430 37l3 6M424.500 112v0.500" />
      </svg>
    `;
  }
}
